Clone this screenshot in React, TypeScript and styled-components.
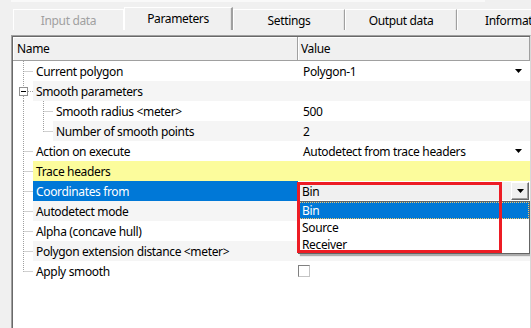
import styled, { createGlobalStyle } from "styled-components";

const GlobalStyle = createGlobalStyle`
  html, body {
    margin: 0;
    padding: 0;
    background: #f0f0f0;
  }
  body {
    font-family: "Segoe UI", "Noto Sans", "Liberation Sans", sans-serif;
    font-size: 12px;
    letter-spacing: -0.35px;
    color: #000;
  }
`;

type RowKind = "normal" | "alt" | "trace" | "selected";

interface Row {
  label: string;
  level: 1 | 2;
  kind: RowKind;
  last?: boolean;
  expander?: boolean;
  value?: string;
  combo?: boolean;
  checkbox?: boolean;
  editor?: boolean;
}

const rows: Row[] = [
  { label: "Current polygon", level: 1, kind: "normal", value: "Polygon-1", combo: true },
  { label: "Smooth parameters", level: 1, kind: "alt", expander: true },
  { label: "Smooth radius <meter>", level: 2, kind: "normal", value: "500" },
  { label: "Number of smooth points", level: 2, kind: "alt", value: "2", last: true },
  { label: "Action on execute", level: 1, kind: "normal", value: "Autodetect from trace headers", combo: true },
  { label: "Trace headers", level: 1, kind: "trace" },
  { label: "Coordinates from", level: 1, kind: "selected", editor: true },
  { label: "Autodetect mode", level: 1, kind: "alt" },
  { label: "Alpha (concave hull)", level: 1, kind: "normal" },
  { label: "Polygon extension distance <meter>", level: 1, kind: "alt" },
  { label: "Apply smooth", level: 1, kind: "normal", last: true, checkbox: true },
];

const tabs = [
  { title: "Input data", width: 111, disabled: true },
  { title: "Parameters", width: 109, active: true },
  { title: "Settings", width: 112 },
  { title: "Output data", width: 112 },
  { title: "Information", width: 100 },
];

const options = ["Bin", "Source", "Receiver"];

const rowBg = (kind: RowKind) =>
  kind === "alt" ? "#f5f5f5" : kind === "trace" ? "#fcfc9c" : "#ffffff";

export default function App() {
  return (
    <Page>
      <GlobalStyle />
      <TopStrip />
      <TabBar>
        {tabs.map((t) => (
          <Tab key={t.title} $width={t.width} $active={t.active} $disabled={t.disabled}>
            {t.title}
          </Tab>
        ))}
      </TabBar>
      <Grid>
        <Header>
          <HeaderCell $name>Name</HeaderCell>
          <HeaderCell>Value</HeaderCell>
        </Header>
        {rows.map((r) => (
          <GridRow key={r.label} $bg={r.kind === "selected" ? "#ffffff" : rowBg(r.kind)}>
            <NameCell>
              <Gutter row={r} />
              <Label $kind={r.kind}>{r.label}</Label>
            </NameCell>
            <ValueCell>
              {r.value && <ValueText>{r.value}</ValueText>}
              {r.combo && <SmallArrow />}
              {r.checkbox && <CheckBox />}
              {r.editor && (
                <>
                  <Combo>
                    <ValueText>Bin</ValueText>
                    <ComboButton>
                      <SmallArrow />
                    </ComboButton>
                  </Combo>
                  <DropList>
                    {options.map((o, i) => (
                      <Option key={o} $active={i === 0}>
                        {o}
                      </Option>
                    ))}
                  </DropList>
                  <Highlight />
                </>
              )}
            </ValueCell>
          </GridRow>
        ))}
      </Grid>
    </Page>
  );
}

function Gutter({ row }: { row: Row }) {
  const w = row.level * 20;
  const dot = { stroke: "#a0a0a0", strokeDasharray: "1 1", strokeWidth: 1 };
  const childX = row.level === 2 ? 30.5 : 10.5;
  return (
    <svg width={w} height={20} style={{ flex: "none", display: "block" }}>
      {row.level === 2 && <line x1={10.5} y1={0} x2={10.5} y2={20} {...dot} />}
      {row.expander ? (
        <>
          <line x1={childX} y1={0} x2={childX} y2={6} {...dot} />
          <line x1={childX} y1={15} x2={childX} y2={20} {...dot} />
          <rect x={6.5} y={6.5} width={8} height={8} fill="#fff" stroke="#919191" />
          <line x1={8} y1={10.5} x2={13} y2={10.5} stroke="#000" />
          <line x1={15} y1={10.5} x2={w} y2={10.5} {...dot} />
        </>
      ) : (
        <>
          <line x1={childX} y1={0} x2={childX} y2={row.last ? 10.5 : 20} {...dot} />
          <line x1={childX} y1={10.5} x2={w} y2={10.5} {...dot} />
        </>
      )}
    </svg>
  );
}

function SmallArrow() {
  return (
    <Arrow width={7} height={4} viewBox="0 0 7 4">
      <polygon points="0,0 7,0 3.5,4" fill="#000" />
    </Arrow>
  );
}

const Page = styled.div`
  width: 531px;
  height: 328px;
  overflow: hidden;
  background: #f0f0f0;
  display: flex;
  flex-direction: column;
`;

const TopStrip = styled.div`
  height: 2px;
  margin: 0 46px 0 11px;
  background: #f9f9f9;
`;

const TabBar = styled.div`
  display: flex;
  align-items: flex-end;
  height: 23px;
  margin-top: 5px;
  padding-left: 13px;
`;

const Tab = styled.div<{ $width: number; $active?: boolean; $disabled?: boolean }>`
  flex: none;
  box-sizing: border-box;
  width: ${(p) => p.$width}px;
  height: ${(p) => (p.$active ? 23 : 21)}px;
  display: flex;
  align-items: center;
  justify-content: center;
  padding-bottom: ${(p) => (p.$active ? 2 : 0)}px;
  white-space: nowrap;
  overflow: hidden;
  color: ${(p) => (p.$disabled ? "#a0a0a0" : "#000")};
  background: #f0f0f0;
  border-top: 1px solid #ffffff;
  border-left: 1px solid #ffffff;
  border-right: ${(p) =>
    p.$disabled ? "1px solid #ffffff" : p.$active ? "2px solid #a0a0a0" : "1px solid #a0a0a0"};
  box-shadow: ${(p) => (p.$disabled ? "none" : "inset -1px 0 0 #e3e3e3")};
  &:last-child {
    justify-content: flex-start;
    padding-left: 27px;
  }
`;

const Grid = styled.div`
  flex: 1;
  margin: 5px 0 0 11px;
  background: #ffffff;
  border-top: 1px solid #a0a0a0;
  border-left: 1px solid #a0a0a0;
  border-right: 1px solid #d8d8d8;
  box-shadow: inset 1px 1px 0 #696969;
  padding: 1px 0 0 1px;
  overflow: hidden;
`;

const Header = styled.div`
  display: grid;
  grid-template-columns: 285px 1fr;
  height: 23px;
  background: #f0f0f0;
  border-bottom: 1px solid #a0a0a0;
`;

const HeaderCell = styled.div<{ $name?: boolean }>`
  display: flex;
  align-items: center;
  padding-left: ${(p) => (p.$name ? 4 : 3)}px;
  box-shadow: inset 1px 1px 0 #ffffff;
  border-right: 1px solid #a0a0a0;
`;

const GridRow = styled.div<{ $bg: string }>`
  display: grid;
  grid-template-columns: 285px 1fr;
  height: 20px;
  background: ${(p) => p.$bg};
`;

const NameCell = styled.div`
  display: flex;
  align-items: stretch;
  background: #ffffff;
  min-width: 0;
`;

const Label = styled.div<{ $kind: RowKind }>`
  flex: 1;
  display: flex;
  align-items: center;
  padding-left: 3px;
  white-space: nowrap;
  overflow: hidden;
  background: ${(p) => (p.$kind === "selected" ? "#0078d7" : rowBg(p.$kind))};
  color: ${(p) => (p.$kind === "selected" ? "#ffffff" : "#000")};
`;

const ValueCell = styled.div`
  position: relative;
  display: flex;
  align-items: center;
  padding-left: 5px;
  padding-right: 8px;
`;

const ValueText = styled.span`
  flex: 1;
  white-space: nowrap;
`;

const Arrow = styled.svg`
  flex: none;
  display: block;
`;

const CheckBox = styled.div`
  box-sizing: border-box;
  width: 12px;
  height: 12px;
  margin-left: -5px;
  background: #fff;
  border-top: 1px solid #808080;
  border-left: 1px solid #808080;
  border-right: 1px solid #c4c4c4;
  border-bottom: 1px solid #c4c4c4;
`;

const Combo = styled.div`
  position: absolute;
  left: 0;
  right: 1px;
  top: 1px;
  bottom: 1px;
  display: flex;
  align-items: center;
  padding-left: 4px;
  background: #f0f0f0;
`;

const ComboButton = styled.div`
  box-sizing: border-box;
  width: 18px;
  height: 18px;
  display: flex;
  align-items: center;
  justify-content: center;
  background: #f0f0f0;
  border-top: 1px solid #ffffff;
  border-left: 1px solid #ffffff;
  border-right: 1px solid #696969;
  border-bottom: 1px solid #696969;
  box-shadow: inset -1px -1px 0 #a0a0a0;
`;

const DropList = styled.div`
  position: absolute;
  left: 0;
  top: 20px;
  width: 230px;
  background: #ffffff;
  border: 1px solid #646464;
  box-shadow: 2px 2px 1px rgba(0, 0, 0, 0.3);
  z-index: 2;
`;

const Option = styled.div<{ $active?: boolean }>`
  box-sizing: border-box;
  height: 17px;
  display: flex;
  align-items: center;
  padding-left: 3px;
  background: ${(p) => (p.$active ? "#0078d7" : "#ffffff")};
  color: ${(p) => (p.$active ? "#ffffff" : "#000")};
  outline: ${(p) => (p.$active ? "1px dotted #f3c86e" : "none")};
  outline-offset: -1px;
`;

const Highlight = styled.div`
  position: absolute;
  left: -1px;
  top: 1px;
  width: 205px;
  height: 71px;
  box-sizing: border-box;
  border: 3px solid #ed1c24;
  z-index: 3;
  pointer-events: none;
`;
